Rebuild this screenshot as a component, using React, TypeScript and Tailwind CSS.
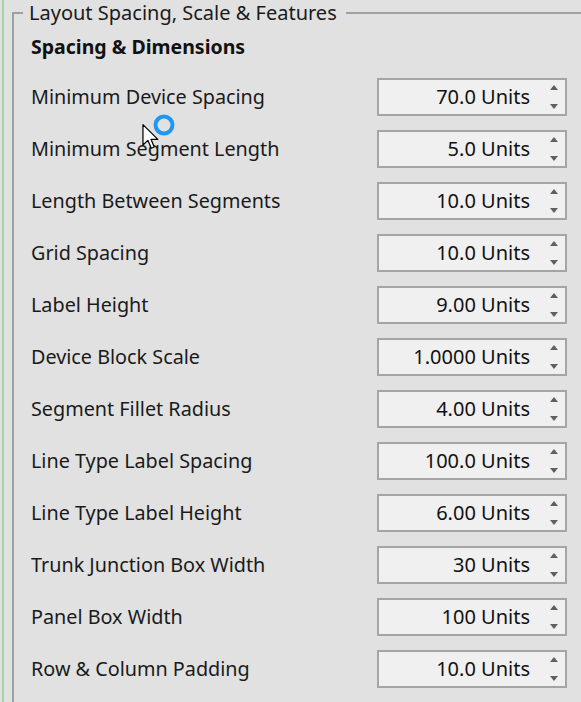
import React from "react";

const rows: [string, string][] = [
  ["Minimum Device Spacing", "70.0 Units"],
  ["Minimum Segment Length", "5.0 Units"],
  ["Length Between Segments", "10.0 Units"],
  ["Grid Spacing", "10.0 Units"],
  ["Label Height", "9.00 Units"],
  ["Device Block Scale", "1.0000 Units"],
  ["Segment Fillet Radius", "4.00 Units"],
  ["Line Type Label Spacing", "100.0 Units"],
  ["Line Type Label Height", "6.00 Units"],
  ["Trunk Junction Box Width", "30 Units"],
  ["Panel Box Width", "100 Units"],
  ["Row & Column Padding", "10.0 Units"],
];

function Spin({ value }: { value: string }) {
  return (
    <div className="relative shrink-0 w-[190px] h-[38px] border-2 border-[#a5a5a5] bg-[#f0f0f0] flex items-center justify-end pr-[35px]">
      <span className="text-[20px] leading-none text-[#111]">{value}</span>
      <div className="absolute right-[7px] top-[5px] flex flex-col gap-[14px]">
        <svg width="8" height="5" viewBox="0 0 8 5">
          <polygon points="4,0 8,5 0,5" fill="#606060" />
        </svg>
        <svg width="8" height="5" viewBox="0 0 8 5">
          <polygon points="0,0 8,0 4,5" fill="#606060" />
        </svg>
      </div>
    </div>
  );
}

export default function App() {
  return (
    <div
      className="relative w-[581px] h-[702px] overflow-hidden bg-[#e1e1e1] flex"
      style={{ fontFamily: '"Noto Sans", "Open Sans", sans-serif' }}
    >
      <div className="ml-[2px] w-[2px] h-full bg-[#a3d6a3]" />
      <fieldset className="ml-[8px] flex-1 border-t-2 border-l-2 border-r-0 border-b-0 border-[#a0a0a0] pl-[17px] pr-[14px] m-0 min-w-0">
        <legend className="-ml-[8px] pl-[6px] pr-[9px] text-[20px] leading-[26px] text-[#1a1a1a] -mt-[1px]">
          Layout Spacing, Scale &amp; Features
        </legend>
        <div className="mt-[7px] h-[28px] flex items-center text-[19.5px] font-bold text-[#111]">
          Spacing &amp; Dimensions
        </div>
        <div className="mt-[10px] flex flex-col">
          {rows.map(([label, value]) => (
            <div key={label} className="h-[52px] flex items-center justify-between">
              <span className="text-[19.8px] text-[#1a1a1a]">{label}</span>
              <Spin value={value} />
            </div>
          ))}
        </div>
      </fieldset>

      <svg className="absolute left-[152px] top-[114px]" width="24" height="24" viewBox="0 0 24 24">
        <circle cx="12" cy="11" r="8.5" fill="none" stroke="#2196f3" strokeWidth="4" />
      </svg>
      <svg className="absolute left-[142px] top-[124px]" width="18" height="26" viewBox="0 0 14 21">
        <path
          d="M0.5 0.5 L0.5 17 L4.5 13.2 L7.2 19.6 L9.6 18.6 L7 12.4 L12.5 12.4 Z"
          fill="#ffffff"
          stroke="#000"
          strokeWidth="1"
          strokeLinejoin="round"
        />
      </svg>
    </div>
  );
}
